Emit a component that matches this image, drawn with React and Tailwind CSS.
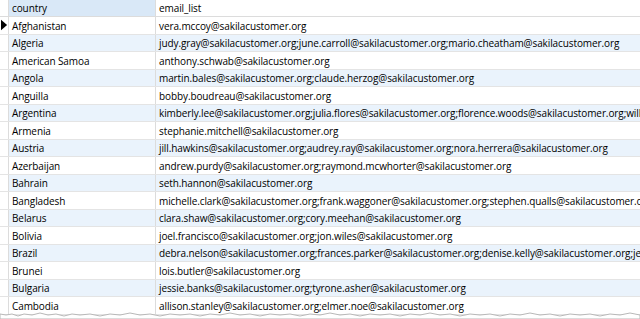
import React from "react";

const rows = [
  ["Afghanistan", "vera.mccoy@sakilacustomer.org"],
  ["Algeria", "judy.gray@sakilacustomer.org;june.carroll@sakilacustomer.org;mario.cheatham@sakilacustomer.org"],
  ["American Samoa", "anthony.schwab@sakilacustomer.org"],
  ["Angola", "martin.bales@sakilacustomer.org;claude.herzog@sakilacustomer.org"],
  ["Anguilla", "bobby.boudreau@sakilacustomer.org"],
  ["Argentina", "kimberly.lee@sakilacustomer.org;julia.flores@sakilacustomer.org;florence.woods@sakilacustomer.org;willie.markham@sakilacustomer.org"],
  ["Armenia", "stephanie.mitchell@sakilacustomer.org"],
  ["Austria", "jill.hawkins@sakilacustomer.org;audrey.ray@sakilacustomer.org;nora.herrera@sakilacustomer.org"],
  ["Azerbaijan", "andrew.purdy@sakilacustomer.org;raymond.mcwhorter@sakilacustomer.org"],
  ["Bahrain", "seth.hannon@sakilacustomer.org"],
  ["Bangladesh", "michelle.clark@sakilacustomer.org;frank.waggoner@sakilacustomer.org;stephen.qualls@sakilacustomer.org"],
  ["Belarus", "clara.shaw@sakilacustomer.org;cory.meehan@sakilacustomer.org"],
  ["Bolivia", "joel.francisco@sakilacustomer.org;jon.wiles@sakilacustomer.org"],
  ["Brazil", "debra.nelson@sakilacustomer.org;frances.parker@sakilacustomer.org;denise.kelly@sakilacustomer.org;jessica.hall@sakilacustomer.org"],
  ["Brunei", "lois.butler@sakilacustomer.org"],
  ["Bulgaria", "jessie.banks@sakilacustomer.org;tyrone.asher@sakilacustomer.org"],
  ["Cambodia", "allison.stanley@sakilacustomer.org;elmer.noe@sakilacustomer.org"],
];

export default function App() {
  return (
    <div
      className="relative w-[640px] h-[319px] overflow-hidden bg-white text-[10px] tracking-[-0.1px] text-[#000]"
      style={{ fontFamily: "'Open Sans', 'DejaVu Sans Condensed', sans-serif" }}
    >
      <div className="flex h-[17px] border-b border-[#dcdcdc]">
        <div className="w-[9px] shrink-0 border-r border-[#dcdcdc] bg-white" />
        <div className="w-[147px] shrink-0 border-r border-[#dcdcdc] bg-[#d9e8f7] pl-[3px] pt-px flex items-center">country</div>
        <div className="flex-1 bg-white pl-[3px] pt-px flex items-center whitespace-nowrap">email_list</div>
      </div>
      {rows.map(([c, e], i) => (
        <div
          key={c}
          className={`flex h-[17.5px] border-b border-[#e4e4e4] ${i % 2 === 1 ? "bg-[#eaf3fc]" : "bg-white"}`}
        >
          <div className="w-[9px] shrink-0 border-r border-[#dcdcdc] bg-white flex items-center">
            {i === 0 && (
              <svg width="8" height="12" viewBox="0 0 8 12" className="ml-[1px]">
                <path d="M0 0 L7 6 L0 12 Z" fill="#000" />
              </svg>
            )}
          </div>
          <div className="w-[147px] shrink-0 border-r border-[#dcdcdc] pl-[3px] pt-[2px] flex items-center whitespace-nowrap overflow-hidden">{c}</div>
          <div className="flex-1 pl-[3px] pt-[2px] flex items-center whitespace-nowrap overflow-hidden">{e}</div>
        </div>
      ))}
      <svg className="absolute left-0 bottom-0" width="640" height="7" viewBox="0 0 640 7">
        <path
          d="M0 2 L6 3 L12 2 L18 4 L24 2 L32 3 L40 1 L48 3 L56 2 L64 4 L72 2 L80 3 L90 2 L100 4 L110 2 L120 3 L130 1 L140 3 L150 2 L160 4 L170 2 L180 3 L190 2 L200 4 L210 2 L220 3 L230 1 L240 3 L250 2 L260 4 L270 2 L280 3 L290 2 L300 4 L310 2 L320 3 L330 1 L340 3 L350 2 L360 4 L370 2 L380 3 L390 2 L400 4 L410 2 L420 3 L430 1 L440 3 L450 2 L460 4 L470 2 L480 3 L490 2 L500 4 L510 2 L520 3 L530 1 L540 3 L550 2 L560 4 L570 2 L580 3 L590 2 L600 4 L610 2 L620 3 L630 1 L640 3 L640 7 L0 7 Z"
          fill="#fff"
          stroke="#b8b8b8"
          strokeWidth="1"
        />
      </svg>
    </div>
  );
}
